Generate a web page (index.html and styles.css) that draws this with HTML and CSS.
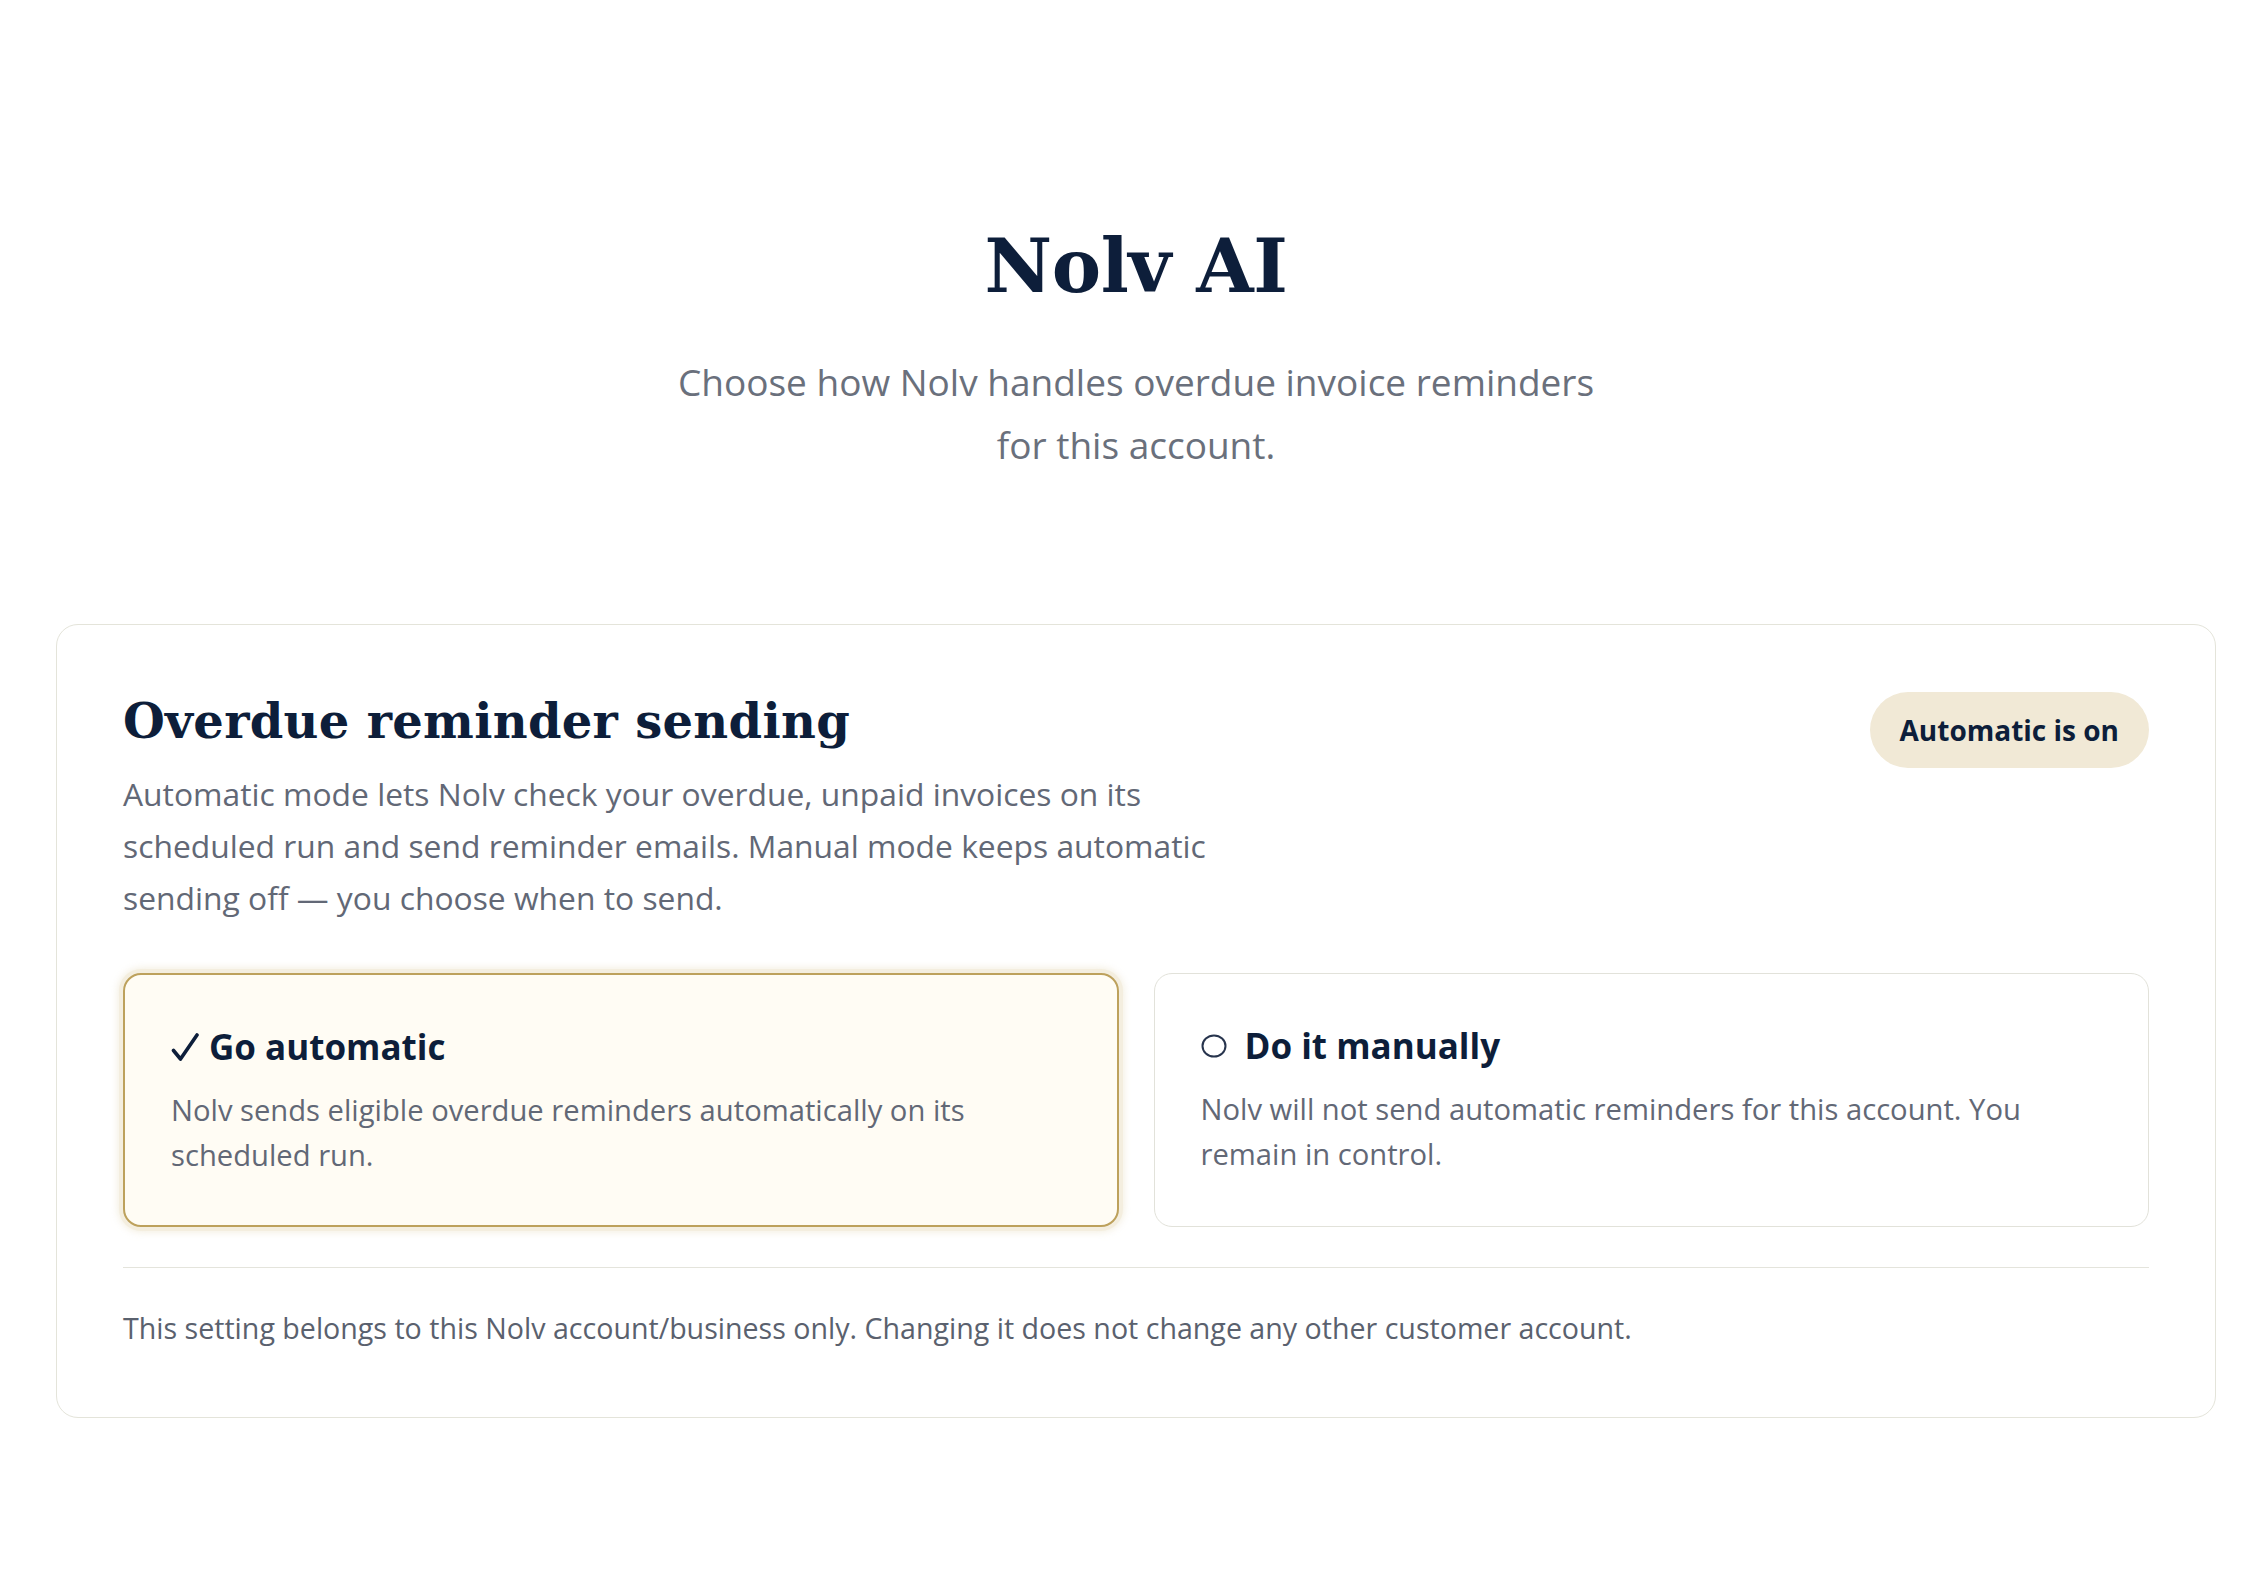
FILE: index.html
```html
<!DOCTYPE html>
<html lang="en">
<head>
<meta charset="utf-8">
<title>Nolv AI</title>
<link rel="stylesheet" href="styles.css">
</head>
<body>
<main class="page">
  <header class="hero">
    <h1 class="brand">Nolv AI</h1>
    <p class="lead">Choose how Nolv handles overdue invoice reminders for this account.</p>
  </header>

  <section class="panel">
    <div class="panel-head">
      <div class="panel-intro">
        <h2 class="panel-title">Overdue reminder sending</h2>
        <p class="panel-desc">Automatic mode lets Nolv check your overdue, unpaid invoices on its scheduled run and send reminder emails. Manual mode keeps automatic sending off — you choose when to send.</p>
      </div>
      <span class="status-pill">Automatic is on</span>
    </div>

    <div class="options">
      <div class="option option-selected">
        <div class="option-title">
          <svg class="icon-check" viewBox="0 0 28 28" aria-hidden="true"><path d="M2.5 17.5 L9.5 26 L26 2" fill="none" stroke="#0d1e3a" stroke-width="3.6" stroke-linecap="round" stroke-linejoin="round"/></svg>
          <span>Go automatic</span>
        </div>
        <p class="option-desc">Nolv sends eligible overdue reminders automatically on its scheduled run.</p>
      </div>
      <div class="option">
        <div class="option-title">
          <svg class="icon-radio" viewBox="0 0 26 24" aria-hidden="true"><ellipse cx="13" cy="12" rx="11.5" ry="10.5" fill="none" stroke="#27344d" stroke-width="2"/></svg>
          <span>Do it manually</span>
        </div>
        <p class="option-desc">Nolv will not send automatic reminders for this account. You remain in control.</p>
      </div>
    </div>

    <p class="panel-foot">This setting belongs to this Nolv account/business only. Changing it does not change any other customer account.</p>
  </section>
</main>
</body>
</html>
```

FILE: styles.css
```css
* { box-sizing: border-box; }

html, body {
  margin: 0;
  background: #ffffff;
}

body {
  font-family: "Open Sans", "Noto Sans", sans-serif;
  color: #0d1e3a;
}

.page {
  padding: 221px 29px 120px 56px;
}

.hero {
  text-align: center;
}

.brand {
  margin: 0;
  font-family: "DejaVu Serif", "Liberation Serif", serif;
  font-weight: 700;
  font-size: 74px;
  line-height: 90px;
  letter-spacing: -0.4px;
  color: #0d1e3a;
}

.lead {
  margin: 39px auto 0;
  max-width: 960px;
  font-size: 37px;
  line-height: 63px;
  color: #6a707c;
}

.panel {
  margin-top: 148px;
  border: 1.5px solid #e4e4da;
  border-radius: 22px;
  padding: 67px 66px 68px 66px;
  background: #ffffff;
}

.panel-head {
  display: flex;
  justify-content: space-between;
  align-items: flex-start;
}

.panel-title {
  margin: 0;
  font-family: "DejaVu Serif", "Liberation Serif", serif;
  font-weight: 700;
  font-size: 48px;
  line-height: 58px;
  letter-spacing: 0.3px;
  color: #0d1e3a;
}

.panel-desc {
  margin: 18px 0 0;
  max-width: 1120px;
  font-size: 31.8px;
  line-height: 52px;
  color: #626876;
}

.status-pill {
  flex: none;
  display: inline-flex;
  align-items: center;
  justify-content: center;
  height: 76px;
  padding: 0 30px;
  border-radius: 38px;
  background: #f1e9d6;
  font-weight: 700;
  font-size: 28px;
  color: #0d1e3a;
}

.options {
  margin-top: 49px;
  display: grid;
  grid-template-columns: 1fr 1fr;
  gap: 35px;
}

.option {
  border: 1.5px solid #e2e2da;
  border-radius: 18px;
  padding: 51px 60px 47px 46px;
  background: #ffffff;
}

.option-selected {
  border: 2px solid #bda15c;
  background: #fffcf4;
  box-shadow: 0 0 0 4px #f4eedf, 0 0 8px 4px rgba(230, 220, 190, 0.6);
}

.option-title {
  display: flex;
  align-items: center;
  font-weight: 700;
  font-size: 35px;
  line-height: 42px;
  color: #0d1e3a;
}

.icon-check {
  width: 28px;
  height: 28px;
  margin-right: 10px;
  flex: none;
}

.icon-radio {
  width: 26px;
  height: 24px;
  margin-right: 18px;
  flex: none;
}

.option-desc {
  margin: 20px 0 0;
  font-size: 29.2px;
  line-height: 45px;
  color: #626876;
}

.panel-foot {
  margin: 40px 0 0;
  padding-top: 38px;
  border-top: 1.5px solid #e4e4dc;
  font-size: 28.6px;
  line-height: 43px;
  color: #5a616e;
}
```
